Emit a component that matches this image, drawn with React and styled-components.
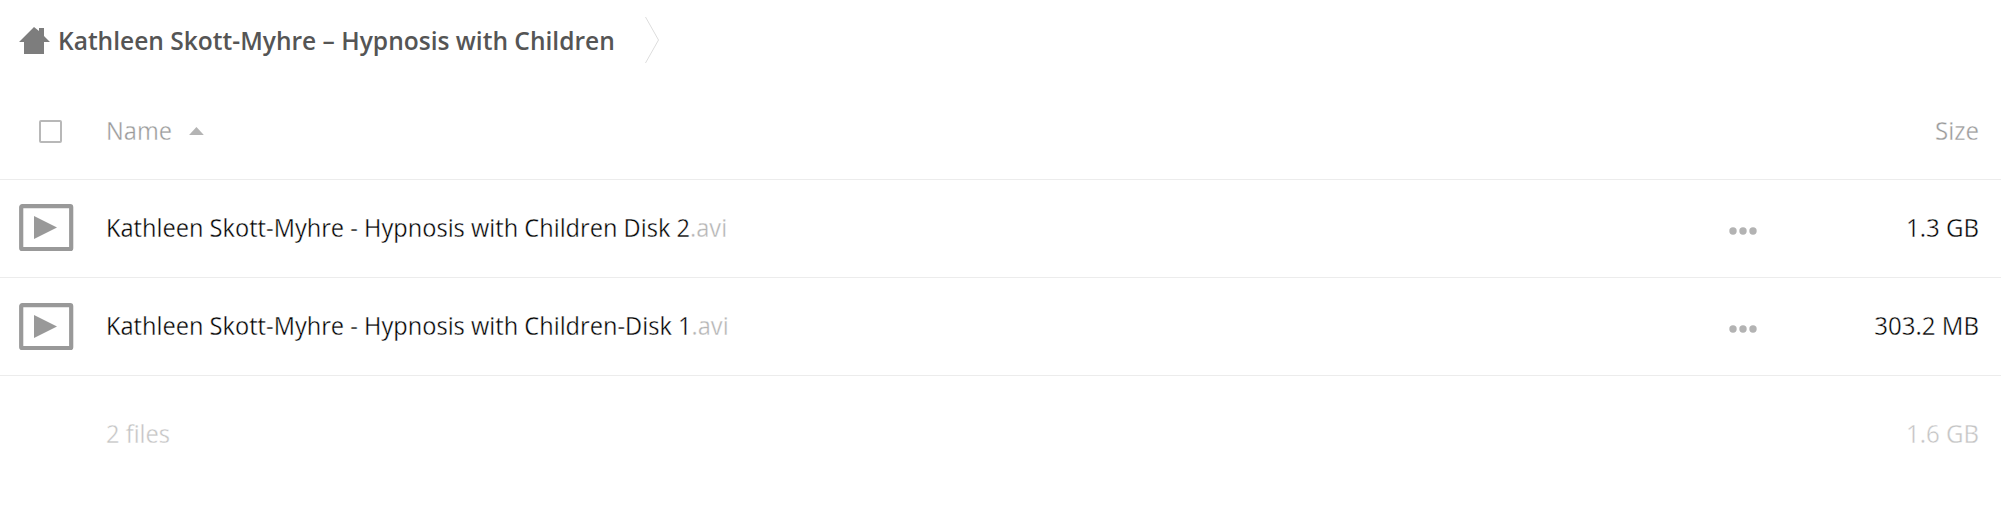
import React from "react";
import styled, { createGlobalStyle } from "styled-components";

const Global = createGlobalStyle`
  html, body { margin: 0; padding: 0; background: #fff; }
  body { font-family: "Open Sans", "Liberation Sans", sans-serif; color: #000; }
`;
const Page = styled.div`width: 2001px; height: 513px; overflow: hidden; background: #fff;`;
const Breadcrumb = styled.nav`
  height: 83px; display: flex; align-items: center; padding-left: 19px;
`;
const HomeIcon = styled.svg`width: 31px; height: 27px; display: block; margin-right: 8px; margin-top: -2px; flex: none;`;
const CrumbText = styled.span`
  font-size: 24.55px; font-weight: 600; color: #555; white-space: nowrap; margin-top: -2px;
`;
const Chevron = styled.svg`width: 14px; height: 46px; margin-left: 30px; margin-top: -3px; display: block;`;
const Row = styled.div`
  display: flex; align-items: center; height: ${p => p.$h}px;
  border-bottom: ${p => p.$line ? "1px solid #ececec" : "none"};
  box-sizing: border-box;
`;
const CheckCell = styled.div`width: 106px; padding-left: 39px; box-sizing: border-box; flex: none;`;
const Check = styled.div`
  width: 23px; height: 23px; box-sizing: border-box; border: 2px solid #b8b8b8; border-radius: 2px;
`;
const IconCell = styled.div`width: 106px; padding-left: 19px; box-sizing: border-box; flex: none;`;
const Thumb = styled.svg`width: 55px; height: 47px; display: block; margin-top: ${p => p.$top}px;`;
const Label = styled.div`
  flex: 1; min-width: 0; font-size: 25.6px; white-space: nowrap; margin-top: -2px;
  -webkit-text-stroke: 0.35px #fff; transform: scaleX(0.923); transform-origin: left center;
  color: ${p => p.$c}; display: flex; align-items: center;
`;
const Ext = styled.span`color: #b4b4b4;`;
const SortArrow = styled.span`
  width: 0; height: 0; margin-left: 18px; margin-top: 1px;
  border-left: 8px solid transparent; border-right: 8px solid transparent; border-bottom: 8px solid #b4b4b4;
`;
const Dots = styled.svg`width: 28px; height: 10px; display: block; flex: none; margin-right: 43px; margin-top: 4px;`;
const Size = styled.div`
  width: 179px; margin-right: 22px; flex: none; text-align: right;
  font-size: 25.6px; color: ${p => p.$c}; margin-top: -2px;
  -webkit-text-stroke: 0.35px #fff; transform: scaleX(0.94); transform-origin: right center;
`;

const Play = ({ top }) => (
  <Thumb viewBox="0 0 55 47" $top={top}>
    <rect x="2.2" y="2.2" width="50" height="43" rx="1" fill="#fff" stroke="#999" strokeWidth="4.2" />
    <path d="M15 12 L38 23.5 L15 35 Z" fill="#999" />
  </Thumb>
);
const More = () => (
  <Dots viewBox="0 0 28 10">
    <circle cx="4" cy="5" r="3.7" fill="#b3b3b3" />
    <circle cx="14" cy="5" r="3.7" fill="#b3b3b3" />
    <circle cx="24" cy="5" r="3.7" fill="#b3b3b3" />
  </Dots>
);

const files = [
  { base: "Kathleen Skott-Myhre - Hypnosis with Children Disk 2", size: "1.3 GB", top: -2 },
  { base: "Kathleen Skott-Myhre - Hypnosis with Children-Disk 1", size: "303.2 MB", top: 0 },
];

export default function App() {
  return (
    <Page>
      <Global />
      <Breadcrumb>
        <HomeIcon viewBox="0 0 31 27">
          <path d="M15 0 L20 4 V1 H25 V9 L31 15 H25 V27 H5 V15 H0 Z" fill="#7d7d7d" />
        </HomeIcon>
        <CrumbText>Kathleen Skott-Myhre – Hypnosis with Children</CrumbText>
        <Chevron viewBox="0 0 14 46"><path d="M0.5 0 L13.5 23 L0.5 46" fill="none" stroke="#ddd" strokeWidth="1" /></Chevron>
      </Breadcrumb>
      <Row $h={97} $line>
        <CheckCell><Check /></CheckCell>
        <Label $c="#999">Name<SortArrow /></Label>
        <Size $c="#999">Size</Size>
      </Row>
      {files.map(f => (
        <Row $h={98} $line key={f.base}>
          <IconCell><Play top={f.top} /></IconCell>
          <Label $c="#000">{f.base}<Ext>.avi</Ext></Label>
          <More />
          <Size $c="#000">{f.size}</Size>
        </Row>
      ))}
      <Row $h={116}>
        <CheckCell />
        <Label $c="#c4c4c4">2 files</Label>
        <Size $c="#c4c4c4">1.6 GB</Size>
      </Row>
    </Page>
  );
}
